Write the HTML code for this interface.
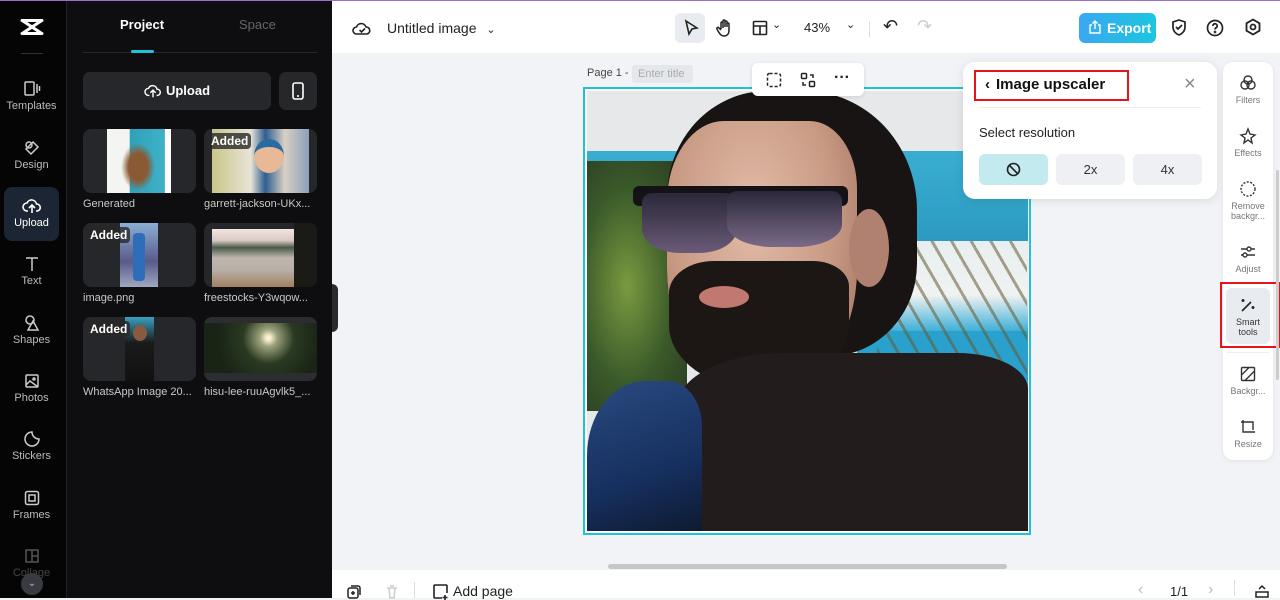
<!DOCTYPE html>
<html><head><meta charset="utf-8"><style>
*{box-sizing:border-box;margin:0;padding:0}
body{width:1280px;height:598px;overflow:hidden;font-family:"Liberation Sans",sans-serif;background:#f1f3f6;position:relative}
.abs{position:absolute}
.side{left:0;top:0;width:67px;height:598px;background:#050506;border-right:1px solid #222}
.nav{position:absolute;left:4px;width:55px;text-align:center;color:#bbb;font-size:11px}
.nav svg{display:block;margin:0 auto 2px}
.panel{left:67px;top:0;width:265px;height:598px;background:#0e0e10}
.thumb{position:absolute;width:113px;height:64px;background:#26272b;border-radius:8px;overflow:hidden}
.cap{position:absolute;color:#c8c8c8;font-size:11px}
.added{position:absolute;left:4px;top:4px;background:rgba(40,40,40,.8);color:#fff;font-weight:bold;font-size:12px;padding:1px 3px;border-radius:4px}
.top{left:332px;top:0;width:948px;height:53px;background:#fff;border-top:1px solid #9b6fc6}
.rb{left:1223px;top:62px;width:50px;height:398px;background:#fff;border-radius:10px;box-shadow:0 1px 4px rgba(0,0,0,.08)}
.ri{position:absolute;left:0;width:50px;text-align:center;color:#777;font-size:9px;line-height:10px}
.ri svg{display:block;margin:0 auto 3px}
.p{position:absolute}
</style></head><body>
<div class="abs" style="left:0;top:0;width:1280px;height:1px;background:#9b6fc6;z-index:5"></div>
<div class="abs side">
 <svg class="abs" style="left:19px;top:17px" width="26" height="20" viewBox="0 0 26 20"><path d="M3 3.5h20M3 16.5h20M4 4l18 12M22 4L4 16" stroke="#fff" stroke-width="3" fill="none" stroke-linecap="round"/></svg>
 <div class="abs" style="left:21px;top:53px;width:22px;height:1px;background:#333"></div>
 <div class="nav" style="top:80px"><svg width="18" height="18" viewBox="0 0 18 18" fill="none" stroke="#ccc" stroke-width="1.5"><rect x="2" y="2" width="9" height="13" rx="1"/><path d="M14 4v9M16.5 6v5"/></svg>Templates</div>
 <div class="nav" style="top:139px"><svg width="18" height="18" viewBox="0 0 18 18" fill="none" stroke="#ccc" stroke-width="1.5"><circle cx="6" cy="6" r="3"/><path d="M10 3l5 5-7 7-5-5z"/></svg>Design</div>
 <div class="abs" style="left:4px;top:187px;width:55px;height:54px;background:#1c2533;border-radius:8px"></div>
 <div class="nav" style="top:197px;color:#fff"><svg width="20" height="18" viewBox="0 0 20 18" fill="none" stroke="#fff" stroke-width="1.6"><path d="M6 14H5a4 4 0 010-8 5 5 0 019.5 1A3.5 3.5 0 0115 14h-1M10 16V9M7 11l3-3 3 3"/></svg>Upload</div>
 <div class="nav" style="top:255px"><svg width="18" height="18" viewBox="0 0 18 18" fill="none" stroke="#ccc" stroke-width="1.5"><path d="M3 3h12M9 3v13"/></svg>Text</div>
 <div class="nav" style="top:314px"><svg width="18" height="18" viewBox="0 0 18 18" fill="none" stroke="#ccc" stroke-width="1.5"><circle cx="7" cy="6" r="4"/><path d="M10 7l5 9H5z"/></svg>Shapes</div>
 <div class="nav" style="top:372px"><svg width="18" height="18" viewBox="0 0 18 18" fill="none" stroke="#ccc" stroke-width="1.5"><rect x="3" y="3" width="12" height="12" rx="1"/><path d="M3 13l4-4 8 6"/><circle cx="11" cy="7" r="1"/></svg>Photos</div>
 <div class="nav" style="top:430px"><svg width="18" height="18" viewBox="0 0 18 18" fill="none" stroke="#ccc" stroke-width="1.5"><path d="M9 2a7 7 0 107 7 7 7 0 01-7-7z"/></svg>Stickers</div>
 <div class="nav" style="top:489px"><svg width="18" height="18" viewBox="0 0 18 18" fill="none" stroke="#ccc" stroke-width="1.5"><rect x="2.5" y="2.5" width="13" height="13" rx="2"/><rect x="6" y="6" width="6" height="6"/></svg>Frames</div>
 <div class="nav" style="top:547px;color:#444"><svg width="18" height="18" viewBox="0 0 18 18" fill="none" stroke="#555" stroke-width="1.5"><rect x="3" y="3" width="12" height="12"/><path d="M9 3v12M9 9h6"/></svg>Collage</div>
 <div class="abs" style="left:21px;top:573px;width:22px;height:22px;border-radius:50%;background:#3a3b40;color:#bbb;font-size:10px;text-align:center;line-height:22px">&#8964;</div>
</div>
<div class="abs panel">
 <div class="abs" style="left:53px;top:17px;color:#fff;font-weight:bold;font-size:13px">Project</div>
 <div class="abs" style="left:172px;top:17px;color:#666;font-size:13px">Space</div>
 <div class="abs" style="left:16px;top:52px;width:234px;height:1px;background:#26262a"></div>
 <div class="abs" style="left:64px;top:50px;width:23px;height:3px;background:#1fc2d8;border-radius:2px"></div>
 <div class="abs" style="left:16px;top:72px;width:188px;height:38px;background:#26272b;border-radius:7px;color:#fff;font-weight:bold;font-size:13px;text-align:center;line-height:38px"><svg style="vertical-align:-4px;margin-right:4px" width="18" height="16" viewBox="0 0 20 18" fill="none" stroke="#fff" stroke-width="1.6"><path d="M6 14H5a4 4 0 010-8 5 5 0 019.5 1A3.5 3.5 0 0115 14h-1M10 16V9M7 11l3-3 3 3"/></svg>Upload</div>
 <div class="abs" style="left:212px;top:72px;width:38px;height:38px;background:#26272b;border-radius:7px"><svg class="abs" style="left:12px;top:10px" width="14" height="18" viewBox="0 0 14 18" fill="none" stroke="#fff" stroke-width="1.6"><rect x="2" y="1" width="10" height="16" rx="2"/><path d="M6 14h2"/></svg></div>
 <div class="thumb" style="left:16px;top:129px"><div class="abs" style="left:24px;top:0;width:64px;height:64px;background:linear-gradient(90deg,#f4f4f2 35%,#2ea0b8 36%,#3fb1c8 90%,#fff 91%)"></div><div class="abs" style="left:38px;top:14px;width:34px;height:48px;background:radial-gradient(ellipse at 50% 50%,#8a5a35 40%,rgba(0,0,0,0) 70%)"></div></div>
 <div class="cap" style="left:16px;top:198px">Generated</div>
 <div class="thumb" style="left:137px;top:129px"><div class="abs" style="left:8px;top:0;width:97px;height:64px;background:linear-gradient(90deg,#c9c68a,#e7e4d6 40%,#2f5d8f 55%,#d9d0c4 75%,#8aa0b8)"></div><div class="abs" style="left:50px;top:10px;width:30px;height:34px;border-radius:50%;background:#e7b996;border-top:8px solid #2a6aa0"></div><div class="added">Added</div></div>
 <div class="cap" style="left:137px;top:198px">garrett-jackson-UKx...</div>
 <div class="thumb" style="left:16px;top:223px"><div class="abs" style="left:37px;top:0;width:38px;height:64px;background:linear-gradient(180deg,#8ab0d6,#5a5a8a 60%,#a0a8c0)"></div><div class="abs" style="left:50px;top:10px;width:12px;height:48px;background:#2e6eb8;border-radius:4px"></div><div class="added">Added</div></div>
 <div class="cap" style="left:16px;top:292px">image.png</div>
 <div class="thumb" style="left:137px;top:223px"><div class="abs" style="left:8px;top:6px;width:82px;height:58px;background:linear-gradient(180deg,#f2e6e0,#d8c8c4 20%,#4a5a48 32%,#c0b8b0 50%,#b8b0a8 70%,#a08060)"></div><div class="abs" style="left:90px;top:0;width:23px;height:64px;background:#1a1a16"></div></div>
 <div class="cap" style="left:137px;top:292px">freestocks-Y3wqow...</div>
 <div class="thumb" style="left:16px;top:317px"><div class="abs" style="left:42px;top:0;width:29px;height:64px;background:linear-gradient(180deg,#3aa0c0,#1a1a1a 40%,#111)"></div><div class="abs" style="left:50px;top:8px;width:14px;height:16px;border-radius:50%;background:#8a5a40"></div><div class="added">Added</div></div>
 <div class="cap" style="left:16px;top:386px">WhatsApp Image 20...</div>
 <div class="thumb" style="left:137px;top:317px;background:#2c2d31"><div class="abs" style="left:0;top:6px;width:113px;height:50px;background:radial-gradient(circle at 57% 30%,#f8f0d0 3%,#9aa07a 12%,#2a3a22 35%,#1a2416 70%)"></div></div>
 <div class="cap" style="left:137px;top:386px">hisu-lee-ruuAgvlk5_...</div>
 <div class="abs" style="left:265px;top:284px;width:6px;height:48px;background:#2a2a2e;border-radius:0 6px 6px 0"></div>
</div>
<div class="abs top">
 <svg class="abs" style="left:20px;top:18px" width="20" height="18" viewBox="0 0 20 18" fill="none" stroke="#222" stroke-width="1.6"><path d="M5 15H4.5a3.5 3.5 0 010-7 5 5 0 019.5 0 3.5 3.5 0 01.5 7z"/><path d="M7.5 11l2 2 3.5-3.5"/></svg>
 <div class="abs" style="left:55px;top:19px;font-size:14px;color:#222">Untitled image <span style="font-size:11px;margin-left:6px">&#8964;</span></div>
 <div class="abs" style="left:343px;top:12px;width:30px;height:30px;background:#e8ebef;border-radius:6px"></div>
 <svg class="abs" style="left:351px;top:18px" width="16" height="18" viewBox="0 0 16 18" fill="none" stroke="#222" stroke-width="1.6"><path d="M3 2l11 7-5 1-3 5z"/></svg>
 <svg class="abs" style="left:384px;top:17px" width="18" height="20" viewBox="0 0 18 20" fill="none" stroke="#222" stroke-width="1.5"><path d="M5 11V5a1 1 0 012 0v5M7 9V3a1 1 0 012 0v6M9 9V4a1 1 0 012 0v5M11 9V6a1 1 0 012 0v6c0 4-2 6-5 6s-4-2-6-5l-1-2a1 1 0 012-1l2 2"/></svg>
 <svg class="abs" style="left:420px;top:19px" width="16" height="16" viewBox="0 0 16 16" fill="none" stroke="#222" stroke-width="1.6"><rect x="1.5" y="1.5" width="13" height="13" rx="1"/><path d="M1.5 6h13M8 6v8.5"/></svg>
 <div class="abs" style="left:440px;top:17px;font-size:11px;color:#222">&#8964;</div>
 <div class="abs" style="left:472px;top:19px;font-size:13px;color:#222">43%</div>
 <div class="abs" style="left:514px;top:17px;font-size:11px;color:#222">&#8964;</div>
 <div class="abs" style="left:537px;top:20px;width:1px;height:16px;background:#ddd"></div>
 <div class="abs" style="left:551px;top:15px;font-size:18px;color:#222">&#8630;</div>
 <div class="abs" style="left:585px;top:15px;font-size:18px;color:#ccc">&#8631;</div>
 <div class="abs" style="left:747px;top:12px;width:77px;height:30px;border-radius:6px;background:linear-gradient(90deg,#3aa8f0,#1bc6e0);color:#fff;font-weight:bold;font-size:14px;line-height:30px;padding-left:28px">Export</div>
 <svg class="abs" style="left:756px;top:19px" width="14" height="14" viewBox="0 0 14 14" fill="none" stroke="#fff" stroke-width="1.4"><path d="M4 5H2v8h10V5h-2M7 9V1M4.5 3.5L7 1l2.5 2.5"/></svg>
 <svg class="abs" style="left:838px;top:17px" width="18" height="19" viewBox="0 0 18 19" fill="none" stroke="#222" stroke-width="1.7"><path d="M9 2l6 2v5c0 4-3 7-6 8-3-1-6-4-6-8V4z"/><path d="M6 9l2 2 4-4"/></svg>
 <svg class="abs" style="left:874px;top:18px" width="18" height="18" viewBox="0 0 18 18" fill="none" stroke="#222" stroke-width="1.7"><circle cx="9" cy="9" r="7.5"/><path d="M6.8 7a2.2 2.2 0 114 1.2c-.8.6-1.8 1-1.8 2.3"/><circle cx="9" cy="13" r=".5"/></svg>
 <svg class="abs" style="left:912px;top:17px" width="18" height="19" viewBox="0 0 18 19" fill="none" stroke="#222" stroke-width="1.8"><path d="M9 1.5l6.5 3.8v7.4L9 16.5l-6.5-3.8V5.3z"/><circle cx="9" cy="9" r="2.5"/></svg>
</div>
<div class="abs" style="left:587px;top:67px;font-size:11px;color:#444">Page 1 -</div>
<div class="abs" style="left:632px;top:65px;width:61px;height:18px;background:#e4e7eb;border-radius:3px;font-size:11px;color:#aaa;padding:3px 6px">Enter title</div>
<div class="abs" style="left:583px;top:87px;width:448px;height:448px;border:2px solid #1fc2d8;background:#fff"></div>
<div class="abs" style="left:587px;top:91px;width:441px;height:440px;overflow:hidden;background:#e6e8ea">
 <div class="p" style="left:0;top:60px;width:441px;height:100px;background:linear-gradient(180deg,#3aaed0,#2a98c0)"></div>
 <div class="p" style="left:270px;top:150px;width:171px;height:90px;background:linear-gradient(180deg,#e8eef0,#f0f2f2 60%,#40b0d8)"></div>
 <div class="p" style="left:270px;top:240px;width:171px;height:80px;background:#2aa0cc"></div>
 <div class="p" style="left:0;top:70px;width:100px;height:250px;background:radial-gradient(ellipse at 40% 50%,#7a9a40,#3a5a2a 55%,#2a3a22)"></div>
 <div class="p" style="left:290px;top:150px;width:150px;height:140px;background:repeating-linear-gradient(60deg,rgba(90,80,50,0) 0 14px,rgba(100,90,50,.55) 14px 17px)"></div>
 <div class="p" style="left:80px;top:0;width:250px;height:265px;border-radius:40% 45% 35% 30%;background:#181414"></div>
 <div class="p" style="left:80px;top:30px;width:190px;height:270px;border-radius:30% 25% 45% 45%;background:radial-gradient(ellipse at 45% 35%,#e2bca8,#c89a84 55%,#9a6a58)"></div>
 <div class="p" style="left:262px;top:118px;width:40px;height:78px;border-radius:50%;background:#b08070"></div>
 <div class="p" style="left:46px;top:95px;width:215px;height:20px;border-radius:6px;background:#141216"></div>
 <div class="p" style="left:55px;top:102px;width:95px;height:60px;border-radius:10px 10px 40% 40%;background:linear-gradient(180deg,#2a2838,#6a5a78)"></div>
 <div class="p" style="left:140px;top:100px;width:115px;height:56px;border-radius:10px 10px 40% 40%;background:linear-gradient(180deg,#2a2838,#7a6a88)"></div>
 <div class="p" style="left:82px;top:170px;width:180px;height:128px;border-radius:25% 20% 50% 50%;background:#1c1614"></div>
 <div class="p" style="left:112px;top:195px;width:50px;height:22px;border-radius:50%;background:#c07870"></div>
 <div class="p" style="left:90px;top:262px;width:351px;height:180px;border-radius:30% 20% 0 0;background:#221c1c"></div>
 <div class="p" style="left:0;top:290px;width:115px;height:150px;border-radius:50% 30% 0 0;background:linear-gradient(160deg,#2a4a80,#163060 60%,#0e1a30)"></div>
</div>
<div class="abs" style="left:752px;top:63px;width:112px;height:33px;background:#fff;border-radius:6px;box-shadow:0 1px 4px rgba(0,0,0,.12)">
 <svg class="abs" style="left:14px;top:9px" width="16" height="16" viewBox="0 0 16 16" fill="none" stroke="#222" stroke-width="1.5" stroke-dasharray="3 2"><rect x="1.5" y="1.5" width="13" height="13" rx="2"/></svg>
 <svg class="abs" style="left:48px;top:9px" width="16" height="16" viewBox="0 0 16 16" fill="none" stroke="#222" stroke-width="1.5"><rect x="1.5" y="1.5" width="5" height="5" rx="1"/><rect x="9.5" y="9.5" width="5" height="5" rx="1"/><path d="M10 3h3v3M6 13H3v-3"/></svg>
 <div class="abs" style="left:82px;top:6px;font-size:16px;font-weight:bold;color:#222">···</div>
</div>
<div class="abs" style="left:963px;top:62px;width:254px;height:137px;background:#fff;border-radius:12px;box-shadow:0 2px 10px rgba(0,0,0,.1)">
 <div class="abs" style="left:11px;top:8px;width:155px;height:31px;border:2px solid #e5141b"></div>
 <div class="abs" style="left:22px;top:14px;font-size:15px;font-weight:bold;color:#111"><span style="font-size:15px;margin-right:6px">&lsaquo;</span>Image upscaler</div>
 <div class="abs" style="left:221px;top:11px;font-size:20px;color:#888">×</div>
 <div class="abs" style="left:16px;top:45px;width:222px;height:1px;background:#eee"></div>
 <div class="abs" style="left:16px;top:63px;font-size:13px;color:#222">Select resolution</div>
 <div class="abs" style="left:16px;top:92px;width:69px;height:31px;border-radius:6px;background:#c3eaef"><svg class="abs" style="left:27px;top:8px" width="15" height="15" viewBox="0 0 15 15" fill="none" stroke="#222" stroke-width="1.6"><circle cx="7.5" cy="7.5" r="6"/><path d="M3.5 3.5l8 8"/></svg></div>
 <div class="abs" style="left:93px;top:92px;width:69px;height:31px;border-radius:6px;background:#eef0f3;text-align:center;line-height:31px;font-size:13px;color:#333">2x</div>
 <div class="abs" style="left:170px;top:92px;width:69px;height:31px;border-radius:6px;background:#eef0f3;text-align:center;line-height:31px;font-size:13px;color:#333">4x</div>
</div>
<div class="abs rb">
 <div class="ri" style="top:12px"><svg width="18" height="18" viewBox="0 0 18 18" fill="none" stroke="#333" stroke-width="1.4"><circle cx="9" cy="6" r="4"/><circle cx="6" cy="11" r="4"/><circle cx="12" cy="11" r="4"/></svg>Filters</div>
 <div class="ri" style="top:65px"><svg width="18" height="18" viewBox="0 0 18 18" fill="none" stroke="#333" stroke-width="1.4"><path d="M9 2l2 5 5 1-4 3 1 5-4-3-4 3 1-5-4-3 5-1z"/></svg>Effects</div>
 <div class="ri" style="top:118px"><svg width="18" height="18" viewBox="0 0 18 18" fill="none" stroke="#333" stroke-width="1.4" stroke-dasharray="2 1.5"><circle cx="9" cy="9" r="7"/></svg>Remove<br>backgr...</div>
 <div class="ri" style="top:181px"><svg width="18" height="18" viewBox="0 0 18 18" fill="none" stroke="#333" stroke-width="1.4"><path d="M2 6h14M2 12h14"/><circle cx="10" cy="6" r="2" fill="#fff"/><circle cx="6" cy="12" r="2" fill="#fff"/></svg>Adjust</div>
 <div class="abs" style="left:3px;top:226px;width:44px;height:56px;background:#e8ebef;border-radius:6px"></div>
 <div class="abs" style="left:-3px;top:220px;width:60px;height:66px;border:2px solid #e5141b"></div>
 <div class="ri" style="top:234px;color:#333"><svg width="18" height="18" viewBox="0 0 18 18" fill="none" stroke="#222" stroke-width="1.6"><path d="M3 15l9-9M4 3v3M2.5 4.5h3M14 10v3M12.5 11.5h3"/></svg>Smart<br>tools</div>
 <div class="abs" style="left:4px;top:290px;width:42px;height:1px;background:#eee"></div>
 <div class="ri" style="top:303px"><svg width="18" height="18" viewBox="0 0 18 18" fill="none" stroke="#333" stroke-width="1.4"><rect x="2.5" y="2.5" width="13" height="13" rx="1"/><path d="M2.5 10l7.5-7.5M6 15.5l9.5-9.5"/></svg>Backgr...</div>
 <div class="ri" style="top:356px"><svg width="18" height="18" viewBox="0 0 18 18" fill="none" stroke="#333" stroke-width="1.4"><path d="M4 2v12h12M2 4h12v8"/></svg>Resize</div>
</div>
<div class="abs" style="left:1276px;top:170px;width:3px;height:210px;background:#ccc;border-radius:2px"></div>
<div class="abs" style="left:608px;top:564px;width:399px;height:5px;background:#c4c6c9;border-radius:3px"></div>
<div class="abs" style="left:332px;top:570px;width:948px;height:28px;background:#fff">
 <svg class="abs" style="left:14px;top:14px" width="16" height="16" viewBox="0 0 16 16" fill="none" stroke="#222" stroke-width="1.5"><rect x="2" y="4" width="10" height="10" rx="2"/><path d="M5 2h7a2 2 0 012 2v7M7 7v4M5 9h4"/></svg>
 <svg class="abs" style="left:52px;top:14px" width="16" height="16" viewBox="0 0 16 16" fill="none" stroke="#ccc" stroke-width="1.5"><path d="M3 4h10M5 4l1 10h4l1-10M6 2h4"/></svg>
 <div class="abs" style="left:82px;top:12px;width:1px;height:16px;background:#ddd"></div>
 <svg class="abs" style="left:100px;top:13px" width="17" height="17" viewBox="0 0 17 17" fill="none" stroke="#222" stroke-width="1.6"><path d="M10 15H3a1 1 0 01-1-1V3a1 1 0 011-1h11a1 1 0 011 1v7M13 12v5M10.5 14.5h5"/></svg>
 <div class="abs" style="left:121px;top:13px;font-size:14px;color:#222">Add page</div>
 <div class="abs" style="left:806px;top:11px;font-size:16px;color:#bbb">&lsaquo;</div>
 <div class="abs" style="left:838px;top:14px;font-size:13px;color:#222">1/1</div>
 <div class="abs" style="left:876px;top:11px;font-size:16px;color:#bbb">&rsaquo;</div>
 <div class="abs" style="left:902px;top:10px;width:1px;height:16px;background:#ddd"></div>
 <svg class="abs" style="left:922px;top:12px" width="16" height="16" viewBox="0 0 16 16" fill="none" stroke="#222" stroke-width="1.5"><path d="M2 10h12v5H2zM5 7l3-3 3 3"/></svg>
</div>
</body></html>
